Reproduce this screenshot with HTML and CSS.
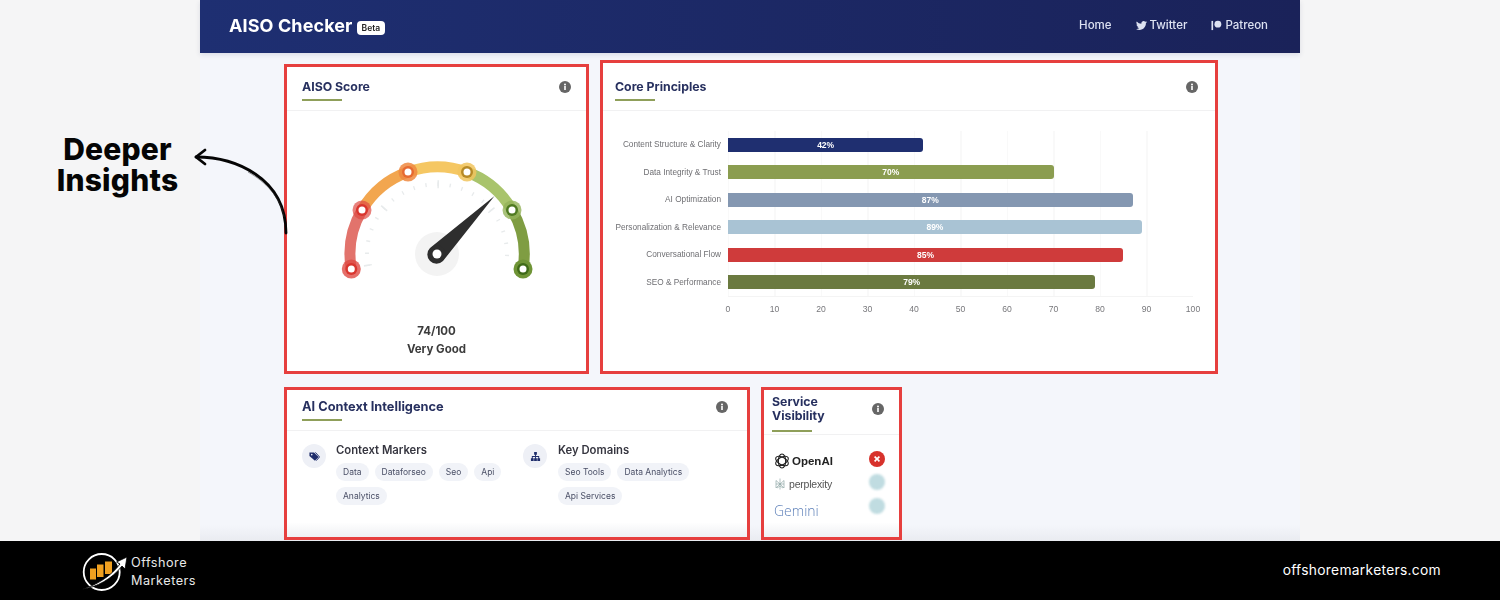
FILE: index.html
```html
<!DOCTYPE html>
<html lang="en">
<head>
<meta charset="utf-8">
<title>AISO Checker</title>
<link rel="stylesheet" href="styles.css">
</head>
<body>
<div class="stage">
  <div class="app">
    <header class="topbar">
      <div class="brand"><span class="brand-name">AISO Checker</span><span class="beta">Beta</span></div>
      <nav class="nav">
        <a class="nav-link">Home</a>
        <a class="nav-link"><svg class="nav-icon" viewBox="0 0 24 24"><path fill="currentColor" d="M23.95 4.57a10 10 0 0 1-2.83.78 4.96 4.96 0 0 0 2.17-2.72c-.95.56-2.02.96-3.13 1.19a4.92 4.92 0 0 0-8.52 3.36c0 .39.04.76.13 1.12A13.98 13.98 0 0 1 1.64 3.16a4.9 4.9 0 0 0 1.52 6.57 4.9 4.9 0 0 1-2.23-.62v.06a4.93 4.93 0 0 0 3.95 4.83c-.72.2-1.48.22-2.22.08a4.93 4.93 0 0 0 4.6 3.42A9.87 9.87 0 0 1 0 19.54a13.94 13.94 0 0 0 7.55 2.21c9.05 0 14-7.5 14-13.98 0-.21 0-.42-.02-.63a9.94 9.94 0 0 0 2.46-2.55z"/></svg>Twitter</a>
        <a class="nav-link"><svg class="nav-icon" viewBox="0 0 24 24"><rect fill="currentColor" x="1" y="2" width="3.6" height="20"/><circle fill="currentColor" cx="15" cy="9" r="7.5"/></svg>Patreon</a>
      </nav>
    </header>
    <div class="fade"></div>
    <main class="content">
      <div class="row row-top">
        <section class="card card-score">
          <div class="card-head head-score">
            <div><h2 class="card-title">AISO Score</h2><div class="rule"></div></div>
            <svg class="info" viewBox="0 0 12 12"><circle cx="6" cy="6" r="6" fill="#666"/><rect x="5.2" y="5" width="1.6" height="4" fill="#fff"/><circle cx="6" cy="3.4" r="1" fill="#fff"/></svg>
          </div>
          <div class="gauge-wrap">
            <svg class="gauge" viewBox="0 0 200 160">
              <g fill="none" stroke-width="11">
                <path d="M14.3 115 A87 87 0 0 1 25 56" stroke="#e2736c"/>
                <path d="M25 56 A87 87 0 0 1 71 18" stroke="#f2a64f"/>
                <path d="M71 18 A87 87 0 0 1 130 18" stroke="#f5c763"/>
                <path d="M130 18 A87 87 0 0 1 175 56" stroke="#a9c46c"/>
                <path d="M175 56 A87 87 0 0 1 186 115" stroke="#7f9d42"/>
              </g>
              <g fill="none" stroke="#e8ebec">
                <path stroke-width="4" stroke-dasharray="1.300 10.900" d="M31 112 A70 70 0 1 1 169 112"/>
                <path stroke-width="8" stroke-dasharray="1.600 59.400" d="M31 112 A70 70 0 1 1 169 112"/>
              </g>
              <circle cx="100" cy="100" r="22" fill="#f3f3f3"/>
              <path d="M93 94 L157.500 42 L106 107 A8.500 8.500 0 0 1 93 94Z" fill="#2e2e2e"/>
              <circle cx="100" cy="100" r="8.500" fill="#2e2e2e"/>
              <circle cx="100" cy="100" r="4.500" fill="#fff"/>
              <g>
                <circle cx="14.300" cy="115" r="9.500" fill="#de4b45" opacity=".8"/><circle cx="14.300" cy="115" r="6" fill="#d9362f"/><circle cx="14.300" cy="115" r="3.500" fill="#fff"/>
                <circle cx="25" cy="56" r="9.500" fill="#de4b45" opacity=".7"/><circle cx="25" cy="56" r="6" fill="#d9362f"/><circle cx="25" cy="56" r="3.500" fill="#fff"/>
                <circle cx="71" cy="18" r="9.500" fill="#ef8840" opacity=".85"/><circle cx="71" cy="18" r="6" fill="#e66a32"/><circle cx="71" cy="18" r="3.500" fill="#fff"/>
                <circle cx="130" cy="18" r="9.500" fill="#f1c45e" opacity=".85"/><circle cx="130" cy="18" r="6" fill="#b78a27"/><circle cx="130" cy="18" r="3.500" fill="#fff"/>
                <circle cx="175" cy="56" r="9.500" fill="#94b35a" opacity=".8"/><circle cx="175" cy="56" r="6" fill="#4f7a22"/><circle cx="175" cy="56" r="3.500" fill="#fff"/>
                <circle cx="186" cy="115" r="9.500" fill="#6f9436"/><circle cx="186" cy="115" r="6" fill="#3f6a18"/><circle cx="186" cy="115" r="3.500" fill="#fff"/>
              </g>
            </svg>
          </div>
          <div class="score-text"><div>74/100</div><div>Very Good</div></div>
        </section>
        <section class="card card-core">
          <div class="card-head head-core">
            <div><h2 class="card-title">Core Principles</h2><div class="rule"></div></div>
            <svg class="info" viewBox="0 0 12 12"><circle cx="6" cy="6" r="6" fill="#666"/><rect x="5.2" y="5" width="1.6" height="4" fill="#fff"/><circle cx="6" cy="3.4" r="1" fill="#fff"/></svg>
          </div>
          <div class="chart">
            <div class="chart-row"><span class="bar-label">Content Structure &amp; Clarity</span><div class="track"><div class="bar bar-navy" style="width:42%">42%</div></div></div>
            <div class="chart-row"><span class="bar-label">Data Integrity &amp; Trust</span><div class="track"><div class="bar bar-olive" style="width:70%">70%</div></div></div>
            <div class="chart-row"><span class="bar-label">AI Optimization</span><div class="track"><div class="bar bar-slate" style="width:87%">87%</div></div></div>
            <div class="chart-row"><span class="bar-label">Personalization &amp; Relevance</span><div class="track"><div class="bar bar-sky" style="width:89%">89%</div></div></div>
            <div class="chart-row"><span class="bar-label">Conversational Flow</span><div class="track"><div class="bar bar-red" style="width:85%">85%</div></div></div>
            <div class="chart-row"><span class="bar-label">SEO &amp; Performance</span><div class="track"><div class="bar bar-moss" style="width:79%">79%</div></div></div>
            <div class="axis">
              <span class="tick">0</span><span class="tick">10</span><span class="tick">20</span><span class="tick">30</span><span class="tick">40</span><span class="tick">50</span><span class="tick">60</span><span class="tick">70</span><span class="tick">80</span><span class="tick">90</span><span class="tick">100</span>
            </div>
          </div>
        </section>
      </div>
      <div class="row row-bottom">
        <section class="card card-context">
          <div class="card-head head-context">
            <div><h2 class="card-title title-large">AI Context Intelligence</h2><div class="rule"></div></div>
            <svg class="info" viewBox="0 0 12 12"><circle cx="6" cy="6" r="6" fill="#666"/><rect x="5.2" y="5" width="1.6" height="4" fill="#fff"/><circle cx="6" cy="3.4" r="1" fill="#fff"/></svg>
          </div>
          <div class="context-body">
            <div class="context-col">
              <div class="round-icon"><svg viewBox="0 0 24 24"><path fill="#1f2d6b" d="M1 3h10l10 10-8 8L1 11z"/><path fill="none" stroke="#1f2d6b" stroke-width="2" d="M14 3l9 10-7 8"/><circle cx="6" cy="8" r="1.800" fill="#eef0f6"/></svg></div>
              <div>
                <h3 class="context-title">Context Markers</h3>
                <div class="tags"><span class="tag">Data</span><span class="tag">Dataforseo</span><span class="tag">Seo</span><span class="tag">Api</span><span class="tag">Analytics</span></div>
              </div>
            </div>
            <div class="context-col col-domains">
              <div class="round-icon"><svg viewBox="0 0 24 24"><path fill="#1f2d6b" d="M9 2h6v6h-2v3h7v5h2v6h-6v-6h2v-3h-5v3h2v6H9v-6h2v-3H6v3h2v6H2v-6h2v-5h7V8H9z"/></svg></div>
              <div>
                <h3 class="context-title">Key Domains</h3>
                <div class="tags"><span class="tag">Seo Tools</span><span class="tag">Data Analytics</span><span class="tag">Api Services</span></div>
              </div>
            </div>
          </div>
        </section>
        <section class="card card-service">
          <div class="card-head head-service">
            <div><h2 class="card-title title-service">Service Visibility</h2><div class="rule rule-service"></div></div>
            <svg class="info info-service" viewBox="0 0 12 12"><circle cx="6" cy="6" r="6" fill="#666"/><rect x="5.2" y="5" width="1.6" height="4" fill="#fff"/><circle cx="6" cy="3.4" r="1" fill="#fff"/></svg>
          </div>
          <div class="services">
            <div class="service">
              <span class="logo-openai"><svg class="openai-mark" viewBox="0 0 24 24"><g fill="none" stroke="#222" stroke-width="1.700"><ellipse cx="12" cy="12" rx="5.500" ry="10.500"/><ellipse cx="12" cy="12" rx="5.500" ry="10.500" transform="rotate(60 12 12)"/><ellipse cx="12" cy="12" rx="5.500" ry="10.500" transform="rotate(120 12 12)"/></g></svg>OpenAI</span>
              <span class="status status-no">×</span>
            </div>
            <div class="service">
              <span class="logo-perplexity"><svg class="perplexity-mark" viewBox="0 0 24 24"><path fill="none" stroke="#8aa3a0" stroke-width="1.300" d="M12 1v22M4 5l8 7 8-7M4 5v7h16V5M4 12v8l8-8 8 8v-8M6 20l6-4 6 4"/></svg>perplexity</span>
              <span class="status status-blur"></span>
            </div>
            <div class="service">
              <span class="logo-gemini">Gemini</span>
              <span class="status status-blur"></span>
            </div>
          </div>
        </section>
      </div>
    </main>
  </div>
  <div class="callout">Deeper<br>Insights</div>
  <svg class="arrow" viewBox="0 0 100 90"><path fill="none" stroke="#050505" stroke-width="2.800" stroke-linecap="round" d="M2 10C40 10 92 30 92 86"/><path fill="none" stroke="#050505" stroke-width="2.800" stroke-linecap="round" stroke-linejoin="round" d="M11 3L2 10L11 17"/><path fill="none" stroke="#333" stroke-width=".5" d="M54 25C72 35 86 50 90 70"/></svg>
</div>
<footer class="footer">
  <div class="f-brand">
    <svg class="f-logo" viewBox="0 0 48 44">
      <circle cx="20.700" cy="23" r="18" fill="none" stroke="#fff" stroke-width="1.800"/>
      <rect x="9" y="19.500" width="6" height="11" fill="#f0a020"/>
      <rect x="16" y="15.500" width="6.500" height="12.500" fill="#f0a020"/>
      <rect x="24" y="12.500" width="7" height="12.500" fill="#f0a020"/>
      <path d="M0.700 40.500C16 36 30 27 39 15L35.500 13L46 8L44 20L41 17C31 30 16 38 0.700 40.500Z" fill="#fff" stroke="#000" stroke-width=".8"/>
    </svg>
    <div class="f-name">Offshore<br>Marketers</div>
  </div>
  <div class="f-url">offshoremarketers.com</div>
</footer>
</body>
</html>
```
FILE: styles.css
```css
* { box-sizing: border-box; }
html, body { margin: 0; height: 600px; overflow: hidden; }
body {
  display: flex;
  flex-direction: column;
  background: #f5f5f6;
  font-family: "Inter", "Liberation Sans", sans-serif;
}
.stage {
  position: relative;
  height: 541px;
  padding: 0 200px;
  overflow: hidden;
}
.app {
  position: relative;
  height: 541px;
  background: #f4f6fb;
  filter: blur(.35px);
}
.topbar {
  height: 53px;
  padding: 0 32px 3px 29px;
  display: flex;
  align-items: center;
  justify-content: space-between;
  background: linear-gradient(90deg, #1e2f72, #1a2259);
  box-shadow: 0 2px 5px rgba(30, 40, 90, .12);
  color: #fff;
}
.brand { display: flex; align-items: center; gap: 4px; }
.brand-name { font-size: 18px; font-weight: 700; letter-spacing: .1px; }
.beta {
  margin-top: 5px;
  padding: 0 5px;
  height: 14px;
  line-height: 14px;
  background: #fff;
  color: #222;
  border-radius: 4px;
  font-size: 8.500px;
  font-weight: 600;
}
.nav { display: flex; gap: 24px; }
.nav-link {
  display: flex;
  align-items: center;
  gap: 3px;
  font-size: 11.500px;
  font-weight: 500;
  color: #dde2f2;
}
.nav-icon { width: 11px; height: 11px; }
.content { position: relative; z-index: 1; padding: 7px 0 0 84px; }
.row { display: flex; gap: 11px; }
.row-top { align-items: flex-end; height: 314px; }
.row-bottom { margin-top: 13px; height: 153px; }
.card {
  background: #fff;
  border: 3px solid #e63f3e;
}
.card-score { width: 305px; height: 310px; }
.card-core { width: 618px; height: 314px; }
.card-context, .card-service {
  background: linear-gradient(180deg, #fff 0 90%, #eff0f3 100%);
}
.card-context { width: 466px; }
.card-service { width: 141px; }
.card-head {
  display: flex;
  align-items: flex-start;
  justify-content: space-between;
  border-bottom: 1px solid #f1f1f2;
}
.head-score { height: 44px; padding: 12px 15px 0; }
.head-core { height: 48px; padding: 16px 17px 0 12px; }
.head-context { height: 41px; padding: 9px 19px 0 15px; }
.head-service { height: 45px; padding: 5px 15px 0 8px; }
.card-title {
  margin: 0;
  font-size: 12.300px;
  font-weight: 700;
  line-height: 16px;
  color: #27305f;
}
.title-large { font-size: 12.800px; }
.title-service { width: 62px; line-height: 14px; }
.rule {
  width: 40px;
  height: 2px;
  margin-top: 4px;
  background: #8f9f5a;
}
.rule-service { margin-top: 7px; }
.info { width: 12px; height: 12px; flex: none; margin-top: 2px; }
.info-service { margin-top: 8px; }

.gauge-wrap { display: flex; justify-content: center; padding-top: 43px; }
.gauge { width: 200px; height: 160px; display: block; margin-left: 1px; }
.score-text {
  margin-top: 8px;
  text-align: center;
  font-size: 11.500px;
  font-weight: 700;
  line-height: 18px;
  color: #3c3c3c;
}

.chart { padding: 20px 22px 0 0; }
.chart-row {
  display: flex;
  align-items: center;
  height: 27.500px;
}
.bar-label {
  width: 118px;
  flex: none;
  margin-right: 7px;
  text-align: right;
  white-space: nowrap;
  font-family: "Liberation Sans", sans-serif;
  font-size: 8.250px;
  color: #6f6f73;
}
.track {
  flex: 1;
  height: 100%;
  display: flex;
  align-items: center;
  background: repeating-linear-gradient(90deg, #f9f9f9 0 1px, transparent 1px 46.500px);
}
.bar {
  height: 14px;
  line-height: 14px;
  border-radius: 0 3px 3px 0;
  text-align: center;
  color: #fff;
  font-family: "Liberation Sans", sans-serif;
  font-size: 8.500px;
  font-weight: 700;
}
.bar-navy { background: #1f2f70; }
.bar-olive { background: #8b9d50; }
.bar-slate { background: #8497b1; }
.bar-sky { background: #a9c3d4; }
.bar-red { background: #cf3b3b; }
.bar-moss { background: #6b7a40; }
.axis {
  display: flex;
  justify-content: space-between;
  margin: 0 0 0 125px;
  padding-top: 7px;
  border-top: 1px solid #f4f4f4;
}
.tick {
  width: 0;
  display: flex;
  justify-content: center;
  font-family: "Liberation Sans", sans-serif;
  font-size: 8.600px;
  color: #77777b;
}

.context-body { display: flex; padding: 12px 0 0 15px; }
.context-col { width: 221px; display: flex; gap: 10px; }
.col-domains { gap: 11px; }
.round-icon {
  width: 24px;
  height: 24px;
  margin-top: 1px;
  flex: none;
  display: flex;
  align-items: center;
  justify-content: center;
  border-radius: 50%;
  background: #eef0f6;
}
.round-icon svg { width: 11px; height: 11px; }
.context-title {
  margin: 0;
  font-size: 11.300px;
  font-weight: 600;
  line-height: 14px;
  color: #363640;
}
.tags { display: flex; flex-wrap: wrap; gap: 6px; margin-top: 6px; width: 170px; }
.tag {
  height: 18px;
  line-height: 18px;
  padding: 0 7px;
  border-radius: 9px;
  background: #f1f3f8;
  font-size: 8.500px;
  color: #4a4f66;
}

.services { padding: 13px 14px 0 10px; }
.service {
  display: flex;
  align-items: center;
  justify-content: space-between;
  height: 23.500px;
}
.logo-openai {
  display: flex;
  align-items: center;
  gap: 2px;
  margin-top: 2px;
  font-family: "Liberation Sans", sans-serif;
  font-size: 11.500px;
  font-weight: 700;
  color: #222;
}
.openai-mark { width: 16px; height: 16px; }
.logo-perplexity {
  display: flex;
  align-items: center;
  gap: 3px;
  margin-top: 2px;
  font-family: "Liberation Sans", sans-serif;
  font-size: 10.500px;
  color: #555;
  letter-spacing: -.2px;
}
.perplexity-mark { width: 12px; height: 14px; }
.logo-gemini {
  margin-top: 7px;
  font-family: "Open Sans", sans-serif;
  font-size: 14px;
  font-weight: 300;
  color: #5c7fb8;
}
.status {
  width: 16px;
  height: 16px;
  border-radius: 50%;
  display: flex;
  align-items: center;
  justify-content: center;
  flex: none;
  margin-top: -2px;
}
.status-no { background: #d7322c; color: #fff; font-size: 11px; font-weight: 800; line-height: 1; }
.status-blur { background: #c0dce1; filter: blur(1px); }

.fade {
  position: absolute;
  left: 0;
  right: 0;
  bottom: 0;
  height: 16px;
  background: linear-gradient(180deg, rgba(220, 222, 228, 0), rgba(220, 222, 228, .45));
}
.callout {
  position: absolute;
  left: 40px;
  top: 134px;
  width: 155px;
  text-align: center;
  font-size: 30px;
  font-weight: 800;
  line-height: 31px;
  letter-spacing: .2px;
  color: #050505;
}
.arrow {
  position: absolute;
  left: 194px;
  top: 147px;
  width: 100px;
  height: 90px;
}

.footer {
  height: 59px;
  display: flex;
  align-items: center;
  justify-content: space-between;
  padding: 0 59px 2px 81px;
  background: #000;
  color: #fff;
}
.f-brand { display: flex; align-items: center; gap: 2px; }
.f-logo { width: 48px; height: 44px; margin-top: 2px; }
.f-name {
  margin-top: 4px;
  font-size: 12.700px;
  line-height: 18px;
  letter-spacing: .5px;
  color: #e8e8e8;
}
.f-url { font-size: 13.800px; letter-spacing: .3px; }
```
